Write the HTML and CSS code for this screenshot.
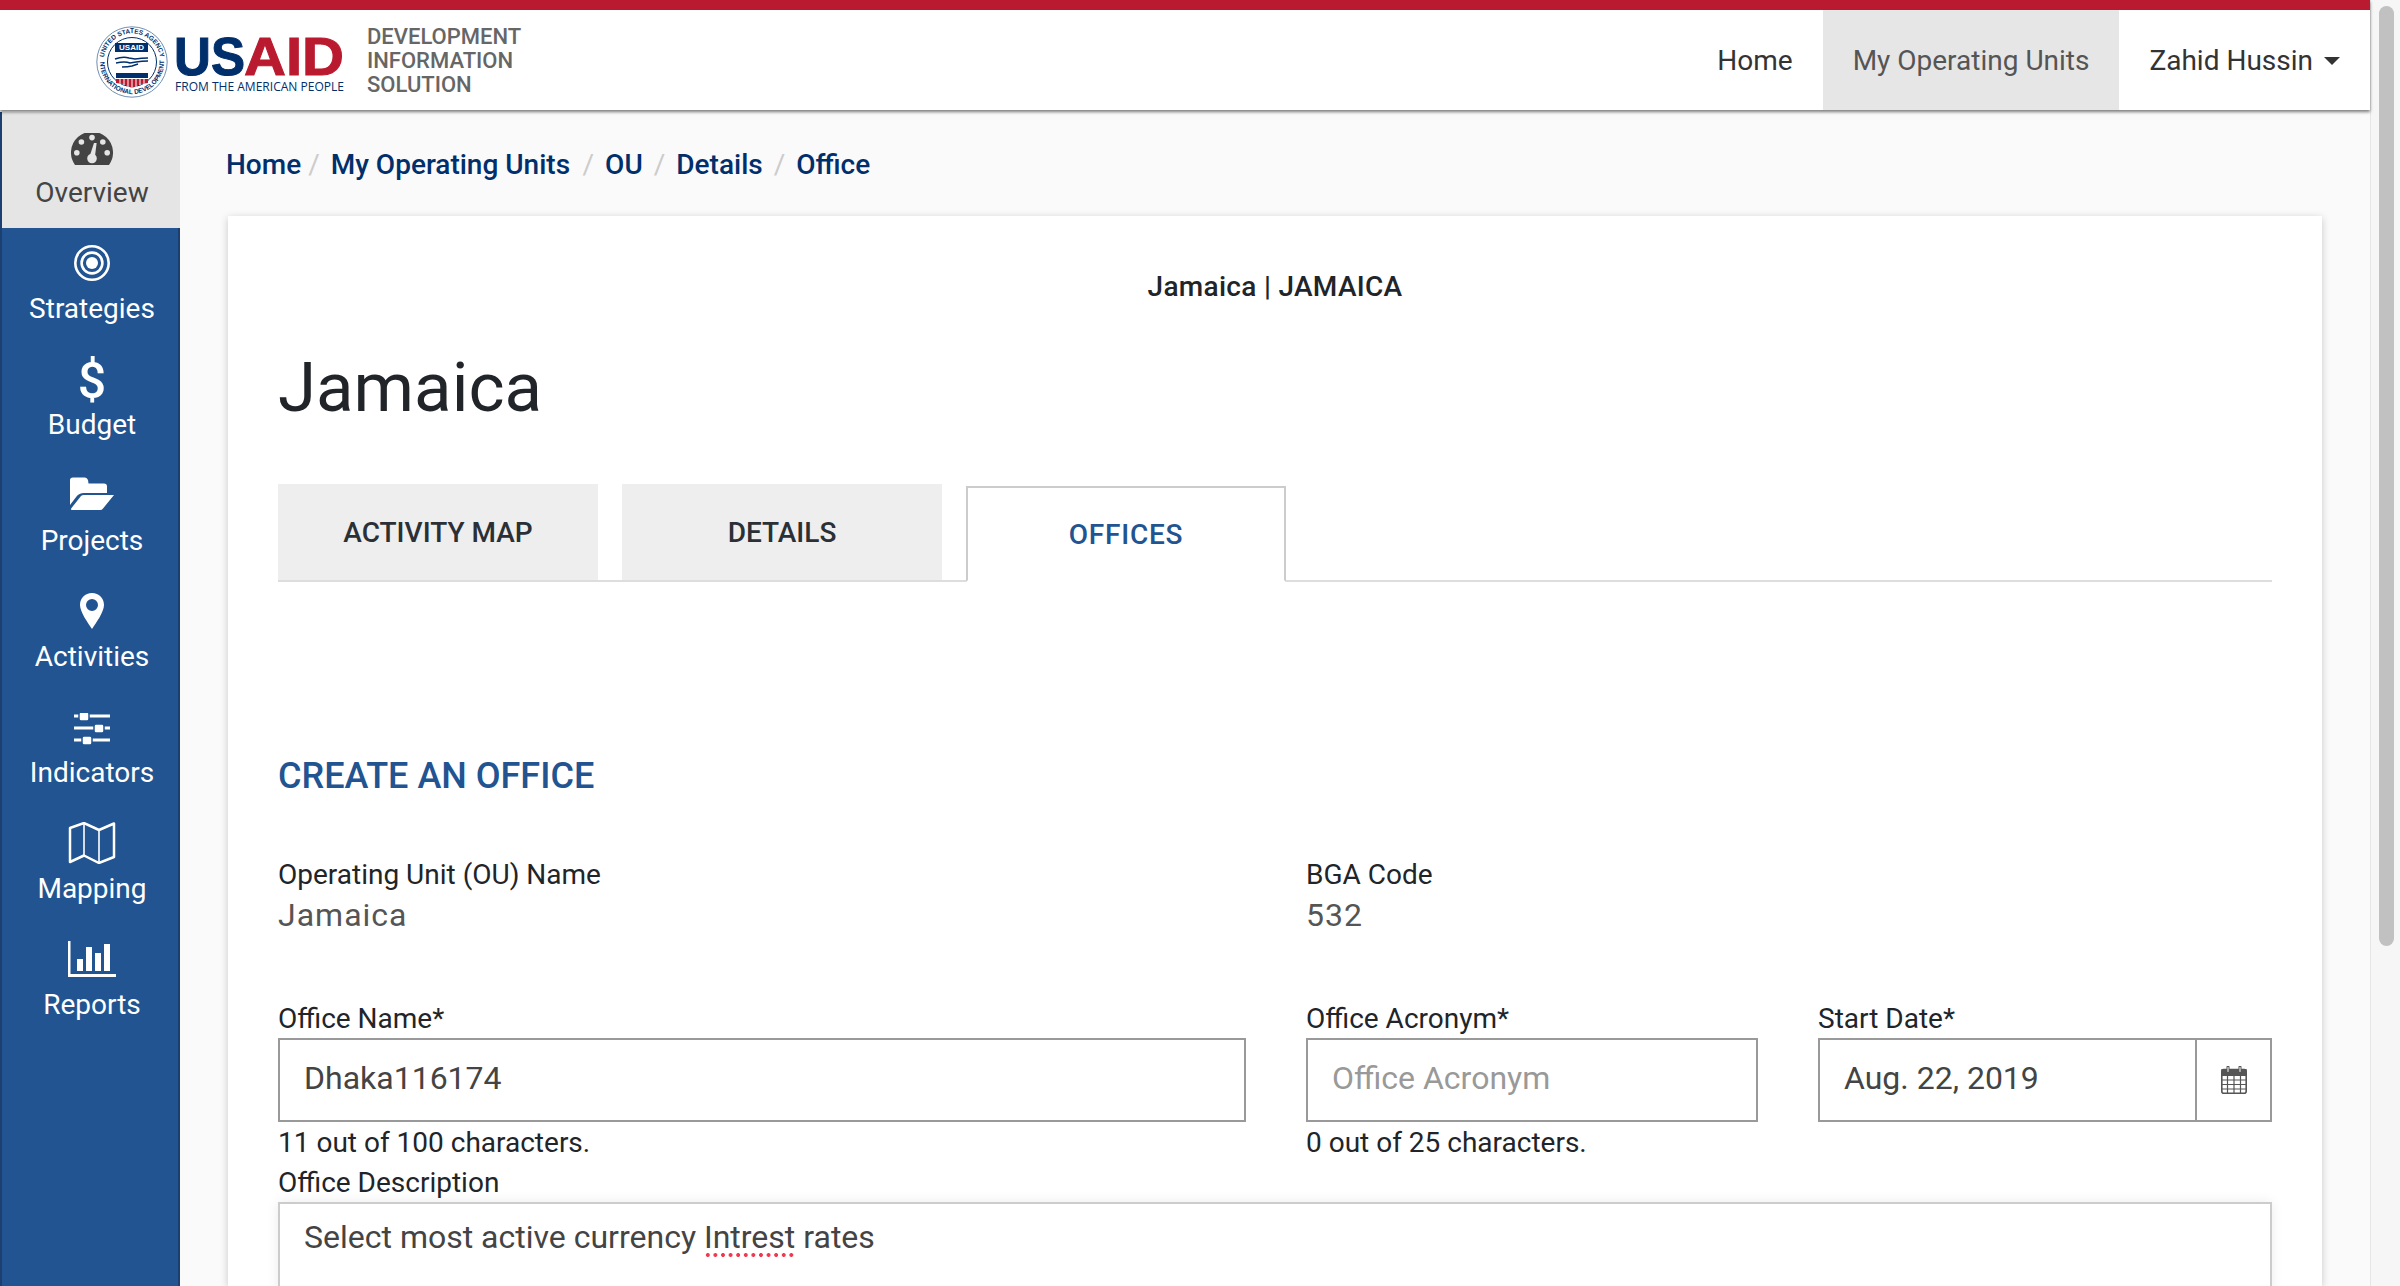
FILE: index.html
```html
<!DOCTYPE html>
<html lang="en">
<head>
  <meta charset="UTF-8">
  <title>Jamaica | JAMAICA</title>
  <link rel="stylesheet" href="styles.css">
</head>
<body>
  <div class="window">
    <div class="page">
      <header class="topbar">
        <div class="brand">
          <svg class="logo" width="250" height="72" viewBox="0 0 250 72">
            <defs>
              <path id="seal-top" d="M7.5 36a28.5 28.5 0 0 1 57 0"/>
              <path id="seal-bottom" d="M4 36a32 32 0 0 0 64 0"/>
            </defs>
            <circle cx="36" cy="36" r="35.2" fill="#fff" stroke="#6f8fb5" stroke-width="1"/>
            <circle cx="36" cy="36" r="24.5" fill="#fff" stroke="#002f6c" stroke-width="1"/>
            <text class="seal-text"><textPath href="#seal-top" startOffset="50%" text-anchor="middle">UNITED STATES AGENCY</textPath></text>
            <text class="seal-text"><textPath href="#seal-bottom" startOffset="50%" text-anchor="middle">INTERNATIONAL DEVELOPMENT</textPath></text>
            <rect x="19" y="17" width="33" height="9" fill="#002f6c"/>
            <text x="35.5" y="24.3" class="seal-usaid" text-anchor="middle">USAID</text>
            <path d="M19 33q8-3 14-1l6 1q7-1 13-1M20 37q9-2 14 0l6-1q6-1 12-1M26 41q6 0 10-1l6-2" fill="none" stroke="#002f6c" stroke-width="1.4"/>
            <rect x="20" y="47" width="32" height="5" fill="#002f6c"/>
            <path d="M20 53h32v4l-7 1-9 4-9-4-7-1z" fill="#ba1a2f"/>
            <path d="M24 53v5M28 53v6M32 53v8M36 53v9M40 53v8M44 53v6M48 53v5" stroke="#fff" stroke-width="1"/>
            <text x="78" y="49" class="logo-us" textLength="71" lengthAdjust="spacingAndGlyphs">US</text>
            <text x="148" y="49" class="logo-aid" textLength="100" lengthAdjust="spacingAndGlyphs">AID</text>
            <text x="79" y="65" class="logo-tag" textLength="169" lengthAdjust="spacingAndGlyphs">FROM THE AMERICAN PEOPLE</text>
          </svg>
          <div class="brand-name">DEVELOPMENT<br>INFORMATION<br>SOLUTION</div>
        </div>
        <nav class="topnav">
          <a class="topnav-item">Home</a>
          <a class="topnav-item active">My Operating Units</a>
          <a class="topnav-item">Zahid Hussin<span class="caret"></span></a>
        </nav>
      </header>

      <div class="layout">
        <aside class="sidebar">
          <a class="side-item active">
            <span class="side-icon">
              <svg class="icon-low" width="42" height="32" viewBox="0 0 42 32">
                <path d="M4 32a21 21 0 1 1 34 0z" fill="#444"/>
                <g fill="#e5e5e5">
                  <circle cx="21" cy="4.6" r="2.8"/>
                  <circle cx="10.4" cy="9" r="2.8"/>
                  <circle cx="31.8" cy="9" r="2.8"/>
                  <circle cx="5.8" cy="19.7" r="2.8"/>
                  <circle cx="36.2" cy="19.7" r="2.8"/>
                  <circle cx="21" cy="25.5" r="4.8"/>
                  <path d="M18.4 24l4.6-14h2.6l-1.8 15z"/>
                </g>
              </svg>
            </span>
            Overview
          </a>
          <a class="side-item">
            <span class="side-icon">
              <svg width="36" height="36" viewBox="0 0 36 36" fill="none" stroke="#fff" stroke-width="2.6">
                <circle cx="18" cy="18" r="16.7"/>
                <circle cx="18" cy="18" r="10.4"/>
                <circle cx="18" cy="18" r="6" fill="#fff" stroke="none"/>
              </svg>
            </span>
            Strategies
          </a>
          <a class="side-item">
            <span class="side-icon icon-low"><span class="dollar">$</span></span>
            Budget
          </a>
          <a class="side-item">
            <span class="side-icon">
              <svg class="icon-high" width="44" height="33" viewBox="0 0 44 33" fill="#fff">
                <path d="M0 3q0-2.500 3-2.500h12q2 0 3 2.500l.5 3.500h15.500q3 0 3 3v6.500h-23q-5 0-7.500 3.500l-6.500 8.500z"/>
                <path d="M11 19q1-1 3-1h30l-11 13.500q-1 1.500-3 1.500h-28q-2 0-.5-2z"/>
              </svg>
            </span>
            Projects
          </a>
          <a class="side-item">
            <span class="side-icon">
              <svg width="24" height="36" viewBox="0 0 24 36">
                <path fill="#fff" fill-rule="evenodd" d="M12 0C5 0 0 5 0 12c0 7 8 18 12 24 4-6 12-17 12-24C24 5 19 0 12 0zm0 6a6 6 0 1 1 0 12 6 6 0 0 1 0-12z"/>
              </svg>
            </span>
            Activities
          </a>
          <a class="side-item">
            <span class="side-icon">
              <svg class="icon-low" width="36" height="32" viewBox="0 0 36 32" fill="#fff">
                <rect y="1.500" width="36" height="3"/>
                <rect y="13.500" width="36" height="3"/>
                <rect y="25.500" width="36" height="3"/>
                <rect x="5" y="-1" width="10" height="9" rx="2" stroke="#215491" stroke-width="1.500"/>
                <rect x="20" y="11" width="10" height="9" rx="2" stroke="#215491" stroke-width="1.500"/>
                <rect x="8" y="23" width="10" height="9" rx="2" stroke="#215491" stroke-width="1.500"/>
              </svg>
            </span>
            Indicators
          </a>
          <a class="side-item">
            <span class="side-icon">
              <svg width="48" height="42" viewBox="0 0 48 42" fill="none" stroke="#fff" stroke-width="2.500" stroke-linejoin="round">
                <path d="M2 6l14-5 15 7 15-6.500v33.500l-15 6-15-7.500-14 6.500z"/>
                <path d="M16 1v33.500M31 8v33" stroke-width="1.600"/>
              </svg>
            </span>
            Mapping
          </a>
          <a class="side-item">
            <span class="side-icon">
              <svg width="48" height="36" viewBox="0 0 48 36" fill="#fff">
                <path d="M0 0h2.500v33h45.500v3h-48z"/>
                <rect x="9" y="18" width="6" height="12"/>
                <rect x="18" y="6" width="6" height="24"/>
                <rect x="27" y="12" width="6" height="18"/>
                <rect x="36" y="3" width="6" height="27"/>
              </svg>
            </span>
            Reports
          </a>
        </aside>

        <main class="content">
          <ol class="crumbs">
            <li><a>Home</a></li>
            <li><a>My Operating Units</a></li>
            <li><a>OU</a></li>
            <li><a>Details</a></li>
            <li><a>Office</a></li>
          </ol>

          <section class="card">
            <div class="card-title">Jamaica | JAMAICA</div>
            <h1>Jamaica</h1>

            <div class="tabs">
              <a class="tab">ACTIVITY MAP</a>
              <a class="tab">DETAILS</a>
              <a class="tab current">OFFICES</a>
            </div>

            <h2>CREATE AN OFFICE</h2>

            <div class="form-grid info-row">
              <div>
                <div class="field-label">Operating Unit (OU) Name</div>
                <div class="field-value">Jamaica</div>
              </div>
              <div>
                <div class="field-label">BGA Code</div>
                <div class="field-value">532</div>
              </div>
            </div>

            <div class="form-grid">
              <div>
                <label class="field-label">Office Name*</label>
                <input class="text-input" type="text" value="Dhaka116174">
                <div class="field-help">11 out of 100 characters.</div>
              </div>
              <div>
                <label class="field-label">Office Acronym*</label>
                <input class="text-input" type="text" placeholder="Office Acronym">
                <div class="field-help">0 out of 25 characters.</div>
              </div>
              <div>
                <label class="field-label">Start Date*</label>
                <div class="date-input">
                  <input class="text-input" type="text" value="Aug. 22, 2019">
                  <span class="date-btn">
                    <svg width="26" height="28" viewBox="0 0 26 28" fill="none" stroke="#555" stroke-width="1.200">
                      <rect x=".8" y="3.500" width="24.400" height="23.700" rx="2" stroke-width="1.600"/>
                      <path d="M1 3.500h24v6h-24z" fill="#555"/>
                      <path d="M7 1v5M19 1v5" stroke="#555" stroke-width="3" stroke-linecap="round"/>
                      <path d="M7 1.500v4M19 1.500v4" stroke="#fff" stroke-width="1" stroke-linecap="round"/>
                      <path d="M1 14h24M1 18.500h24M1 23h24M6.500 9v18M13 9v18M19.500 9v18"/>
                    </svg>
                  </span>
                </div>
              </div>
            </div>

            <label class="field-label">Office Description</label>
            <div class="text-area">Select most active currency <span class="misspelled">Intrest</span> rates</div>
          </section>
        </main>
      </div>
    </div>
    <div class="scrollbar"><div class="scroll-thumb"></div></div>
  </div>
</body>
</html>
```

FILE: styles.css
```css
* {
  box-sizing: border-box;
}

html,
body {
  margin: 0;
  height: 100%;
  overflow: hidden;
}

body {
  font-family: 'Roboto', 'Liberation Sans', sans-serif;
  font-size: 28px;
  color: #212529;
  background-color: #fafafa;
}

.window {
  display: flex;
  height: 1286px;
}

.page {
  flex: 1;
  min-width: 0;
  display: flex;
  flex-direction: column;
}

/* top bar */
.topbar {
  height: 110px;
  flex: none;
  display: flex;
  justify-content: space-between;
  background-color: #fff;
  border-top: 10px solid #ba1a2f;
  box-shadow: 0 2px 3px rgba(0, 0, 0, 0.5);
  position: relative;
  z-index: 2;
}

.brand {
  display: flex;
  align-items: center;
  padding-left: 96px;
}

.logo {
  display: block;
  margin-top: 4px;
}

.seal-text {
  font-family: 'Liberation Sans', sans-serif;
  font-size: 6.5px;
  font-weight: 700;
  fill: #002f6c;
}

.seal-usaid {
  font-family: 'Liberation Sans', sans-serif;
  font-size: 8px;
  font-weight: 700;
  fill: #fff;
}

.logo-us,
.logo-aid {
  font-family: 'Liberation Sans', sans-serif;
  font-size: 53px;
  font-weight: 700;
  stroke-width: 1px;
}

.logo-us {
  fill: #002f6c;
  stroke: #002f6c;
}

.logo-aid {
  fill: #ba1a2f;
  stroke: #ba1a2f;
}

.logo-tag {
  font-family: 'Open Sans', sans-serif;
  font-size: 13px;
  fill: #002f6c;
}

.brand-name {
  margin-left: 21px;
  padding-top: 1px;
  font-size: 22px;
  font-weight: 500;
  line-height: 24px;
  color: #666;
}

.topnav {
  display: flex;
}

.topnav-item {
  display: flex;
  align-items: center;
  padding: 0 30px;
  color: #333;
}

.topnav-item.active {
  background-color: #e6e6e6;
  color: #555;
}

.caret {
  width: 0;
  height: 0;
  margin-left: 11px;
  margin-top: 2px;
  border-top: 8px solid #333;
  border-left: 8px solid transparent;
  border-right: 8px solid transparent;
}

/* sidebar */
.layout {
  flex: 1;
  min-height: 0;
  display: flex;
  padding-top: 2px;
}

.sidebar {
  width: 180px;
  flex: none;
  background-color: #215491;
  border-left: 2px solid #1a3f70;
  border-right: 2px solid #1a3f70;
}

.side-item {
  display: flex;
  flex-direction: column;
  align-items: center;
  height: 116px;
  padding: 12px 0 0 4px;
  line-height: 40px;
  color: #fff;
}

.side-item.active {
  margin-right: -2px;
  padding-left: 2px;
  background-color: #e5e5e5;
  color: #444;
}

.side-icon {
  height: 46px;
  margin-bottom: 3px;
  display: flex;
  align-items: center;
  justify-content: center;
}

.icon-low {
  margin-top: 4px;
}

.icon-high {
  margin-bottom: 4px;
}

.side-icon.icon-low {
  height: 42px;
}

.dollar {
  font-size: 50px;
  font-weight: 500;
  line-height: 44px;
}

/* main area */
.content {
  flex: 1;
  min-width: 0;
  padding: 0 48px;
  overflow: hidden;
}

.crumbs {
  display: flex;
  height: 104px;
  margin: 0 0 0 -2px;
  padding: 33px 0 0;
  list-style: none;
  font-weight: 500;
  line-height: 40px;
}

.crumbs a {
  color: #002f6c;
}

.crumbs li + li::before {
  content: "/";
  padding: 0 11px;
  color: #ccc;
  font-weight: 400;
}

.crumbs li:nth-child(2)::before {
  padding-left: 7px;
}

.crumbs li:nth-child(3)::before {
  padding-left: 12.5px;
}

.card {
  height: 1070px;
  padding: 29px 50px;
  overflow: hidden;
  background-color: #fff;
  box-shadow: 0 2px 8px rgba(0, 0, 0, 0.2);
}

.card-title {
  text-align: center;
  font-weight: 500;
  letter-spacing: 0.3px;
  line-height: 84px;
}

h1 {
  margin: 17px 0 0;
  font-size: 69px;
  font-weight: 400;
  line-height: 84px;
}

.tabs {
  display: flex;
  gap: 24px;
  height: 98px;
  margin-top: 54px;
  border-bottom: 2px solid #ddd;
}

.tab {
  width: 320px;
  height: 96px;
  line-height: 98px;
  text-align: center;
  font-weight: 500;
  color: #2b3036;
  background-color: #eee;
}

.tab.current {
  margin-top: 2px;
  line-height: 94px;
  color: #215491;
  letter-spacing: 0.8px;
  background-color: #fff;
  border: 2px solid #ccc;
  border-bottom: 2px solid #fff;
}

h2 {
  margin: 172px 0 0;
  font-size: 36px;
  font-weight: 500;
  line-height: 44px;
  color: #215491;
}

.form-grid {
  display: grid;
  grid-template-columns: 968px 452px 454px;
  column-gap: 60px;
}

.info-row {
  margin-top: 56px;
  margin-bottom: 64px;
}

.field-label {
  display: block;
  padding-top: 2px;
  line-height: 38px;
}

.field-value {
  margin-top: 2px;
  font-size: 32px;
  letter-spacing: 1px;
  line-height: 38px;
  color: #555;
}

.text-input {
  display: block;
  width: 100%;
  height: 84px;
  padding: 0 24px 4px;
  font-family: inherit;
  font-size: 32px;
  color: #444;
  background-color: #fff;
  border: 2px solid #999;
  border-radius: 0;
  outline: none;
}

.text-input::placeholder {
  color: #999;
}

.field-help {
  padding-top: 1px;
  line-height: 39px;
}

.date-input {
  display: flex;
}

.date-input .text-input {
  flex: 1;
  min-width: 0;
  border-right: none;
}

.date-btn {
  width: 77px;
  height: 84px;
  flex: none;
  display: flex;
  align-items: center;
  justify-content: center;
  border: 2px solid #999;
}

.text-area {
  height: 300px;
  padding: 11px 24px;
  font-size: 32px;
  line-height: 44px;
  color: #444;
  border: 2px solid #ccc;
  box-shadow: 0 0 12px rgba(0, 0, 0, 0.08);
}

.misspelled {
  padding-bottom: 1px;
  background: radial-gradient(circle, #f0384f 1.7px, transparent 2.2px) 0 100% / 7.6px 4px repeat-x;
}

/* fake window scrollbar */
.scrollbar {
  width: 30px;
  flex: none;
  padding: 6px 6px 0 8px;
  background-color: #f6f6f6;
  border-left: 1px solid #e6e6e6;
}

.scroll-thumb {
  height: 940px;
  background-color: #c1c1c1;
  border-radius: 8px;
}
```
